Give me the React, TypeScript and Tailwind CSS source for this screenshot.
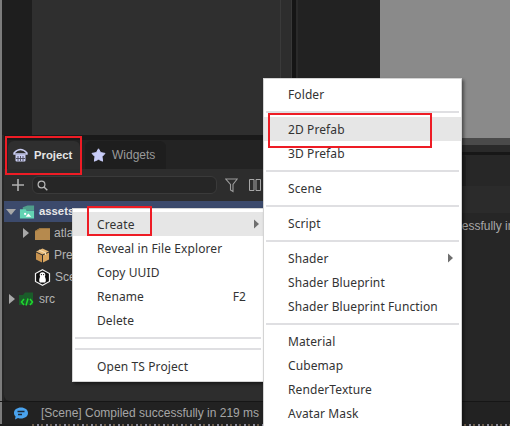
import React from "react";

const sans = "font-['Liberation_Sans',Arial,sans-serif]";
const menuFont = "font-['Noto_Sans','Noto_Sans_CJK_SC',sans-serif]";

function Tri({ dir = "right", className = "" }: { dir?: "right" | "down"; className?: string }) {
  return (
    <svg width="10" height="12" viewBox="0 0 10 12" className={className}>
      {dir === "right" ? <path d="M2 1 L8 6 L2 11 Z" fill="#a8a8a8" /> : <path d="M0 3 L10 3 L5 9 Z" fill="#a8a8a8" />}
    </svg>
  );
}

function HomeIcon() {
  return (
    <svg width="15" height="14" viewBox="0 0 15 14">
      <path d="M1 5 Q7.5 -2 14 5 L14 6 L1 6 Z" fill="none" stroke="#c9cdf2" strokeWidth="1.4" />
      <rect x="2.5" y="6.5" width="10" height="7" rx="1" fill="#c9cdf2" />
      <path d="M5 8v5M7.5 8v5M10 8v5M3 10.5h9" stroke="#4a4a5a" strokeWidth="0.9" />
    </svg>
  );
}

function StarIcon() {
  return (
    <svg width="15" height="14" viewBox="0 0 15 14">
      <path d="M7.5 0.8 L9.6 4.6 L14 5.4 L11 8.7 L11.6 13.2 L7.5 11.3 L3.4 13.2 L4 8.7 L1 5.4 L5.4 4.6 Z" fill="#c8ccf8" stroke="#c8ccf8" strokeWidth="1" strokeLinejoin="round" />
    </svg>
  );
}

function AssetsIcon() {
  return (
    <svg width="16" height="16" viewBox="0 0 17 16">
      <path d="M4 3 L9 1 H16 V6 H4 Z" fill="#4f9e8b" />
      <path d="M1 5 H7 L8 6.5 H16 V15 H1 Z" fill="#63d3b3" />
      <path d="M7 13 L10 9.5 L13 13 Z" fill="#fff" />
      <circle cx="6.5" cy="10" r="1.2" fill="#fff" />
    </svg>
  );
}

function FolderIcon() {
  return (
    <svg width="15" height="13" viewBox="0 0 15 13">
      <path d="M0 4 L5 1 H15 V13 H0 Z" fill="#b68a4e" />
      <path d="M0 4 L5 1 H15 V2 H5.5 L1 4.5 Z" fill="#9b7640" />
    </svg>
  );
}

function BoxIcon() {
  return (
    <svg width="15" height="15" viewBox="0 0 15 15">
      <path d="M7.5 0.5 L14 3.5 L7.5 6.5 L1 3.5 Z" fill="#e5b877" />
      <path d="M1 4.5 L7 7.2 V14.5 L1 11.5 Z" fill="#c8934f" />
      <path d="M8 7.2 L14 4.5 V11.5 L8 14.5 Z" fill="#dba862" />
      <path d="M4 2 L10.5 5 V7" stroke="#f4dcb0" strokeWidth="1.2" fill="none" />
    </svg>
  );
}

function SceneIcon() {
  return (
    <svg width="17" height="17" viewBox="0 0 17 17">
      <path d="M8.5 0.8 L15.5 4.5 V12.5 L8.5 16.2 L1.5 12.5 V4.5 Z" fill="#111" stroke="#f2f2f2" strokeWidth="1.2" />
      <circle cx="8.5" cy="6" r="2.8" fill="#fff" />
      <path d="M8.5 6 C12 7 12.5 12.5 11 13.5 H6 C4.5 12.5 5 7 8.5 6 Z" fill="#fff" />
      <circle cx="7.4" cy="5.6" r="0.6" fill="#111" />
      <circle cx="9.6" cy="5.6" r="0.6" fill="#111" />
    </svg>
  );
}

function SrcIcon() {
  return (
    <svg width="16" height="15" viewBox="0 0 16 15">
      <path d="M0 3 L4 3 L6 0.5 H14 V13 H0 Z" fill="#1a5c2a" />
      <path d="M5 7 L2.5 10 L5 13 M11 7 L13.5 10 L11 13 M9 6.5 L7 13.5" stroke="#22d62e" strokeWidth="1.5" fill="none" />
    </svg>
  );
}

function TreeRow({
  children,
  pl,
  active,
  text,
  bold,
}: {
  children: React.ReactNode;
  pl: string;
  active?: boolean;
  text: string;
  bold?: boolean;
}) {
  return (
    <div className={`flex items-center ${pl} ${active ? "h-[21px] bg-[#3c4a6c]" : "h-[22px]"}`}>
      {children}
      <span className={`ml-1 ${bold ? "text-[11.3px] font-bold text-[#e8e8e8]" : "text-[12px] text-[#b4b4b4]"}`}>{text}</span>
    </div>
  );
}

function Sep() {
  return (
    <div className="flex h-[11px] items-center px-[2px]">
      <div className="h-[2px] w-full bg-[#dfdfe2]" />
    </div>
  );
}

function Item({
  label,
  hint,
  arrow,
  hover,
  pr = "pr-1",
}: {
  label: string;
  hint?: string;
  arrow?: boolean;
  hover?: boolean;
  pr?: string;
}) {
  return (
    <div className={`flex h-6 items-center pl-6 pt-[2px] text-[12px] tracking-[0.1px] text-[#333] ${pr} ${hover ? "bg-[#e6e6e6]" : ""}`}>
      <span className="flex-1 whitespace-nowrap">{label}</span>
      {hint && <span className="pr-[13px]">{hint}</span>}
      {arrow && (
        <svg width="5" height="10" viewBox="0 0 5 10" className="mb-[2px]">
          <path d="M0 0.5 L5 5 L0 9.5 Z" fill="#6f6f6f" />
        </svg>
      )}
    </div>
  );
}

const menuBox = "absolute border border-[#d4d4d4] bg-white shadow-[2px_2px_3px_rgba(0,0,0,0.45)]";

export default function App() {
  return (
    <div className={`relative flex h-[426px] w-[510px] flex-col overflow-hidden bg-[#1f1f1f] ${sans}`}>
      {/* upper editor panes */}
      <div className="flex h-[135px] shrink-0">
        <div className="w-[2px] bg-[#7c7c7c]" />
        <div className="w-[30px] bg-[#1e1e1e]" />
        <div className="w-[249px] border-r border-[#3a3a3a] bg-[#2f2f2f]" />
        <div className="w-[11px] border-r border-[#383838] bg-[#2d2d2d]" />
        <div className="w-[4px] bg-[#151515]" />
        <div className="w-[84px] border-l-2 border-[#2a2a2a] bg-[#222222]" />
        <div className="flex-1 bg-[#8a8a8a]" />
      </div>

      {/* lower panes */}
      <div className="flex min-h-0 flex-1">
        <div className="w-[2px] bg-[#7c7c7c]" />
        <div className="w-[2px] bg-[#262626]" />
        <div className="flex w-[275px] flex-col">
          <div className="h-[5px] bg-[#1a1a1a]" />
          <div className="flex h-[29px] gap-[5px] bg-[#232323] pl-1 pt-px">
            <div className="flex w-[72px] items-center gap-[6px] rounded-t-[6px] bg-[#2f2f2f] pl-[5px] text-[11.3px] font-bold text-[#e4e4e4]">
              <HomeIcon />
              <span>Project</span>
            </div>
            <div className="flex w-[81px] items-center gap-[6px] rounded-t-[6px] bg-[#1e1e1e] pl-[6px] text-[12px] text-[#9a9a9a]">
              <StarIcon />
              <span>Widgets</span>
            </div>
          </div>
          <div className="flex h-8 items-center bg-[#2d2d2d] pl-2">
            <svg width="12" height="12" viewBox="0 0 12 12">
              <path d="M6 0v12M0 6h12" stroke="#b0b0b0" strokeWidth="1.6" />
            </svg>
            <div className="ml-2 flex h-[18px] w-[185px] items-center rounded-[6px] border border-[#3a3a3a] bg-[#262626] pl-1">
              <svg width="11" height="11" viewBox="0 0 11 11">
                <circle cx="4.5" cy="4.5" r="3.4" fill="none" stroke="#b8b8b8" strokeWidth="1.2" />
                <path d="M7 7l3.3 3.3" stroke="#b8b8b8" strokeWidth="1.4" />
              </svg>
            </div>
            <svg width="13" height="15" viewBox="0 0 13 15" className="ml-2">
              <path d="M0.8 1 H12.2 L8 6.5 V13.5 L5.5 12 V6.5 Z" fill="none" stroke="#9c9c9c" strokeWidth="1.1" />
            </svg>
            <svg width="12" height="12" viewBox="0 0 12 12" className="ml-[11px]">
              <path d="M0.5 0.5h4.5v11h-4.5zM7 0.5h4.5v11H7z" fill="none" stroke="#a8a8a8" strokeWidth="1" />
            </svg>
          </div>
          <div className="min-h-0 flex-1 rounded-b-[6px] bg-[#2d2d2d]">
            <TreeRow pl="pl-[2px]" active text="assets" bold>
              <Tri dir="down" />
              <span className="ml-[3px] flex">
                <AssetsIcon />
              </span>
            </TreeRow>
            <TreeRow pl="pl-[17px]" text="atlas">
              <Tri />
              <span className="ml-[4px] flex">
                <FolderIcon />
              </span>
            </TreeRow>
            <TreeRow pl="pl-[31px]" text="Prefab">
              <BoxIcon />
            </TreeRow>
            <TreeRow pl="pl-[30px]" text="Scene">
              <SceneIcon />
            </TreeRow>
            <TreeRow pl="pl-[3px]" text="src">
              <Tri />
              <span className="ml-[2px] flex">
                <SrcIcon />
              </span>
            </TreeRow>
          </div>
        </div>
        <div className="flex min-w-0 flex-1 flex-col">
          <div className="h-[3px] bg-[#8a8a8a]" />
          <div className="h-[7px] bg-[#4a4a4a]" />
          <div className="h-[7px] bg-[#2a2a2a]" />
          <div className="h-[3px] bg-[#171717]" />
          <div className="flex h-[31px] bg-[#272727]">
            <div className="w-[187px] rounded-tr-[4px] bg-[#212121]" />
          </div>
          <div className="h-[27px] bg-[#2b2b2b]" />
          <div className="min-h-0 flex-1 bg-[#262626]">
            <div className="whitespace-nowrap pl-[60px] pt-[4px] text-[12px] text-[#a8a8a8]">[Scene] Compiled successfully in 219 ms</div>
          </div>
        </div>
      </div>

      {/* status bar */}
      <div className="flex h-[23px] shrink-0 items-center border-t border-[#161616] bg-[#222222]">
        <div className="w-[2px] self-stretch bg-[#7c7c7c]" />
        <svg width="14" height="13" viewBox="0 0 14 13" className="ml-[12px]">
          <path d="M7 0.5 C11 0.5 14 2.8 14 6 C14 9.2 11 11.5 7 11.5 C6 11.5 5 11.4 4 11 L1 12.5 L1.6 9.5 C0.6 8.5 0 7.4 0 6 C0 2.8 3 0.5 7 0.5 Z" fill="#4aa3ee" />
          <path d="M3.5 4.5h7M4 7.5h4" stroke="#1f2a38" strokeWidth="1.4" />
        </svg>
        <span className="ml-[13px] whitespace-nowrap text-[12px] text-[#a6a6a6]">[Scene] Compiled successfully in 219 ms</span>
      </div>
      <div className="h-[2px] shrink-0 bg-[#1f1f1f] pl-[32px]">
        <div className="h-[2px] w-full bg-[repeating-linear-gradient(90deg,#6b5b4a_0px,#6b5b4a_2px,#1f1f1f_2px,#1f1f1f_5px,#8a8a9a_5px,#8a8a9a_7px,#1f1f1f_7px,#1f1f1f_9px)]" />
      </div>

      {/* Context menu */}
      <div className={`${menuBox} left-[72px] top-[208px] w-[192px] pb-[3px] pt-[3px] ${menuFont}`}>
        <Item label="Create" arrow hover />
        <Item label="Reveal in File Explorer" />
        <Item label="Copy UUID" />
        <Item label="Rename" hint="F2" />
        <Item label="Delete" />
        <Sep />
        <Sep />
        <Item label="Open TS Project" />
      </div>

      {/* Submenu */}
      <div className={`${menuBox} left-[263px] top-[78px] h-[360px] w-[199px] pt-[3px] ${menuFont}`}>
        <Item label="Folder" />
        <Sep />
        <Item label="2D Prefab" hover />
        <Item label="3D Prefab" />
        <Sep />
        <Item label="Scene" />
        <Sep />
        <Item label="Script" />
        <Sep />
        <Item label="Shader" arrow pr="pr-2" />
        <Item label="Shader Blueprint" />
        <Item label="Shader Blueprint Function" />
        <Sep />
        <Item label="Material" />
        <Item label="Cubemap" />
        <Item label="RenderTexture" />
        <Item label="Avatar Mask" />
      </div>

      {/* annotation boxes */}
      <div className="absolute left-[5px] top-[136px] h-[39px] w-[77px] border-2 border-[#ee1c25]" />
      <div className="absolute left-[87px] top-[206px] h-[30px] w-[65px] border-2 border-[#ee1c25]" />
      <div className="absolute left-[268px] top-[113px] h-[35px] w-[164px] border-2 border-[#ee1c25]" />
    </div>
  );
}
